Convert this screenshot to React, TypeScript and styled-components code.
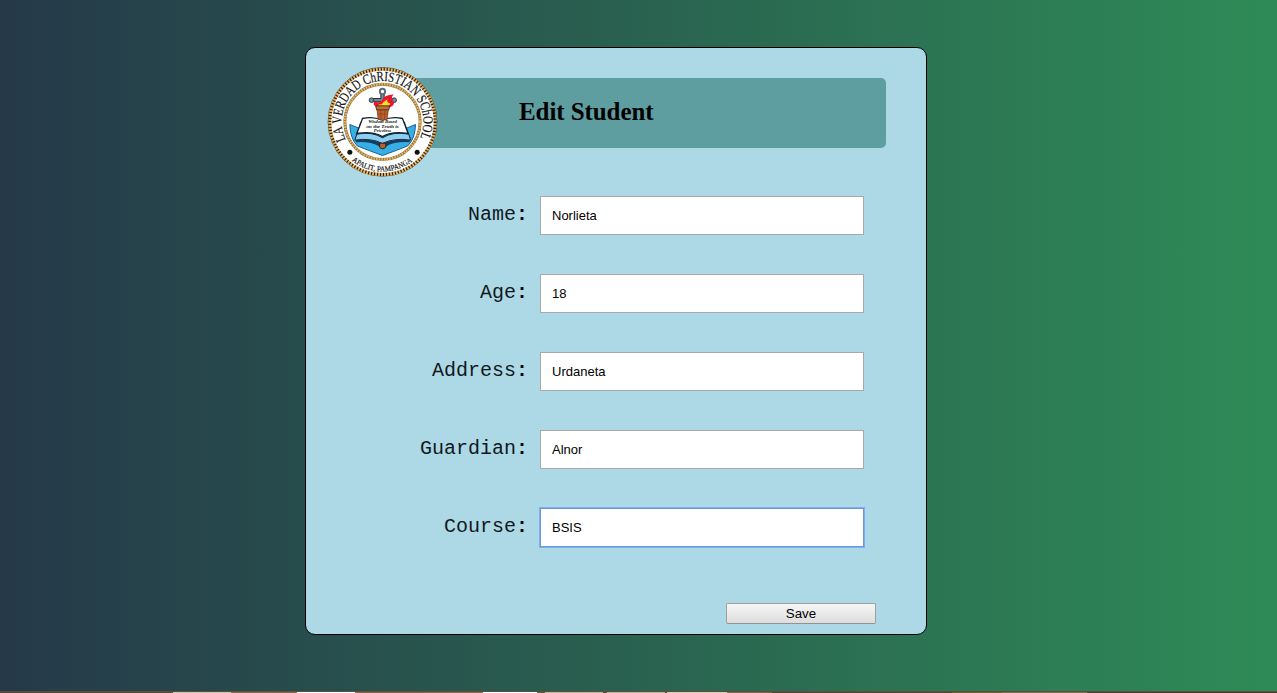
import React from 'react';
import styled, { createGlobalStyle } from 'styled-components';

const GlobalStyle = createGlobalStyle`
  html, body { margin: 0; height: 100%; overflow: hidden; }
  #root { height: 100%; }
  *, *::before, *::after { box-sizing: border-box; }
`;

const Page = styled.div`
  display: flex;
  flex-direction: column;
  justify-content: space-between;
  height: 693px;
  background: linear-gradient(to right, #253949, #2e8b57);
`;

const Panel = styled.form`
  position: relative;
  display: flex;
  flex-direction: column;
  width: 622px;
  height: 588px;
  margin: 47px 0 0 305px;
  padding: 30px 40px 10px 80px;
  border: 1px solid #000;
  border-radius: 10px;
  background: #add8e6;
`;

const Banner = styled.header`
  height: 70px;
  flex: none;
  padding: 19px 0 0 133px;
  border-radius: 5px;
  background: #5f9ea0;
`;

const Title = styled.h1`
  margin: 0;
  font: bold 25px/29px "Liberation Serif", serif;
  letter-spacing: -0.08px;
  color: #000;
`;

const Seal = styled.svg`
  position: absolute;
  left: 21px;
  top: 19px;
  width: 111px;
  height: 111px;
`;

const Fields = styled.div`
  display: flex;
  flex-direction: column;
  gap: 39px;
  margin-top: 48px;
`;

const Field = styled.label`
  display: flex;
  align-items: center;
  justify-content: flex-end;
  gap: 12px;
  height: 39px;
  padding-right: 22px;
`;

const Caption = styled.span`
  padding-bottom: 3px;
  font: 20px/23px "Liberation Mono", monospace;
  color: #12191c;

  b { color: #000; }
`;

const Input = styled.input<{ $active?: boolean }>`
  width: 324px;
  height: 39px;
  padding: 1px 11px;
  border: 1px solid ${p => (p.$active ? '#6f98d8' : '#a9a9a9')};
  border-radius: 0;
  outline: none;
  box-shadow: ${p => (p.$active ? '0 0 0 1px #7eaef0' : 'none')};
  background: #fff;
  font: 13px "Liberation Sans", sans-serif;
  color: #000;
`;

const SaveButton = styled.button`
  align-self: flex-end;
  width: 150px;
  height: 21px;
  margin: auto 10px 0 0;
  padding: 0;
  border: 1px solid #a0a0a0;
  border-bottom-color: #929292;
  border-radius: 2px;
  background: linear-gradient(#f6f6f6, #dddddd);
  font: 13.33px/18px "Liberation Sans", sans-serif;
  color: #000;
`;

const Strip = styled.div`
  display: flex;
  height: 2px;
  border-top: 1px solid #56503f;
`;

const Segment = styled.i<{ $w: number; $c: string }>`
  width: ${p => p.$w}px;
  background: ${p => p.$c};
`;

const segments: [number, string][] = [
  [173, '#5b4631'], [58, '#d3c5ae'], [66, '#95684c'], [58, '#ffffff'],
  [128, '#95614a'], [54, '#ffffff'], [8, '#6b5142'], [58, '#c6b59b'],
  [4, '#704334'], [58, '#c6b59b'], [2, '#704334'], [60, '#dac9af'],
  [45, '#876047'], [180, '#5d4032'], [50, '#76582f'], [85, '#8a684d'], [190, '#4c3d2c'],
];

const SchoolSeal = () => (
  <Seal viewBox="20.5 20.5 333 333" aria-label="La Verdad Christian School">
    <defs>
      <path id="upperArc" d="M 77 239 A 122.5 122.5 0 1 1 298 237" />
      <path id="lowerArc" d="M 95 302 A 149 149 0 0 0 279 302" />
    </defs>
    <circle cx="187" cy="185" r="163" fill="#fff" stroke="#5d4a2e" strokeWidth="3" />
    <circle cx="187" cy="185" r="158" fill="none" stroke="#e6b565" strokeWidth="9" />
    <circle cx="187" cy="185" r="158" fill="none" stroke="#2d2118" strokeWidth="9" strokeDasharray="3.5 5.5" />
    <circle cx="187" cy="185" r="113" fill="none" stroke="#8f713d" strokeWidth="9" />
    <circle cx="187" cy="185" r="113" fill="none" stroke="#e3b868" strokeWidth="7" strokeDasharray="5 3" />
    <g fill="#111" stroke="#111" fontFamily="Liberation Serif, serif">
      <text fontSize="42" strokeWidth="0.5">
        <textPath href="#upperArc" textLength="490" lengthAdjust="spacingAndGlyphs">LA VERDAD ChRISTIAN SChOOL</textPath>
      </text>
      <text fontSize="23" strokeWidth="0.5">
        <textPath href="#lowerArc" textLength="196" lengthAdjust="spacingAndGlyphs">APALIT, PAMPANGA</textPath>
      </text>
    </g>
    <circle cx="89" cy="276" r="7.5" fill="#111" />
    <circle cx="291" cy="276" r="7.5" fill="#111" />
    <path d="M89 193 L123 207 L113 213 Q119 246 152 258 H222 Q252 245 262 213 L252 207 L286 193 Q285 235 263 257 Q231 270 187 286 Q143 270 111 257 Q90 235 89 193Z" fill="#35afe6" stroke="#1c5c8e" strokeWidth="3" />
    <path d="M120 240 H254 L236 258 L187 272 L138 258Z" fill="#35afe6" />
    <path d="M105 236 L120 188 L131 178 L244 178 L254 186 L271 236 Z" fill="#17466f" />
    <path d="M110 222 Q156 213 187 233 Q218 213 266 222 L271 240 Q222 232 187 250 Q151 232 104 240Z" fill="#8ccdf0" stroke="#102f4b" strokeWidth="3" />
    <path d="M106 240 Q151 234 187 250 Q224 234 271 240 L267 246 Q222 244 197 259 H178 Q151 243 108 246Z" fill="#173c5d" />
    <path d="M127 175 Q158 168 187 180 Q216 168 247 175 L264 220 Q216 212 187 229 Q156 212 110 220Z" fill="#fff" stroke="#102332" strokeWidth="4" />
    <path d="M178 249 H197 V261 Q188 271 178 261Z" fill="#b3602a" stroke="#321f14" strokeWidth="3" />
    <circle cx="187" cy="94" r="8" fill="#fff" stroke="#5c6e78" strokeWidth="6" />
    <path d="M187 102 V130 M157 120 H218" stroke="#26343c" strokeWidth="13" />
    <path d="M187 102 V128 M157 120 H218" stroke="#738a96" strokeWidth="7" />
    <circle cx="154" cy="120" r="7" fill="#738a96" stroke="#34434b" strokeWidth="3" />
    <circle cx="222" cy="120" r="7" fill="#738a96" stroke="#34434b" strokeWidth="3" />
    <path d="M171 142 Q154 133 164 124 Q180 130 185 122 Q192 103 220 103 Q210 115 222 128 Q220 139 204 144Z" fill="#ed1430" />
    <path d="M178 139 Q168 132 185 132 Q188 125 203 117 Q196 126 211 130 Q206 140 198 141Z" fill="#ffdd23" />
    <path d="M170 145 H205 L201 177 Q187 183 174 177Z" fill="#b9612d" stroke="#71391c" strokeWidth="2" />
    <path d="M167 137 H208 L206 149 H169Z" fill="#c17137" stroke="#5d3119" strokeWidth="3" />
    <path d="M182 150 V177 M193 150 V177 M172 162 H202" stroke="#854520" strokeWidth="2" />
    <g fill="#111" fontFamily="Liberation Serif, serif" fontSize="10" fontStyle="italic" fontWeight="bold" textAnchor="middle">
      <text x="187" y="190" textLength="86" lengthAdjust="spacingAndGlyphs">Wisdom Based</text>
      <text x="187" y="203" textLength="98" lengthAdjust="spacingAndGlyphs">on the Truth is</text>
      <text x="187" y="216" textLength="52" lengthAdjust="spacingAndGlyphs">Priceless</text>
    </g>
  </Seal>
);

const fields = [
  ['Name', 'Norlieta'],
  ['Age', '18'],
  ['Address', 'Urdaneta'],
  ['Guardian', 'Alnor'],
  ['Course', 'BSIS'],
];

export default function App() {
  return (
    <>
      <GlobalStyle />
      <Page>
        <Panel onSubmit={e => e.preventDefault()}>
          <Banner><Title>Edit Student</Title></Banner>
          <SchoolSeal />
          <Fields>
            {fields.map(([label, value]) => (
              <Field key={label}>
                <Caption>{label}<b>:</b></Caption>
                <Input defaultValue={value} $active={label === 'Course'} />
              </Field>
            ))}
          </Fields>
          <SaveButton type="submit">Save</SaveButton>
        </Panel>
        <Strip>
          {segments.map(([w, c], i) => <Segment key={i} $w={w} $c={c} />)}
        </Strip>
      </Page>
    </>
  );
}
